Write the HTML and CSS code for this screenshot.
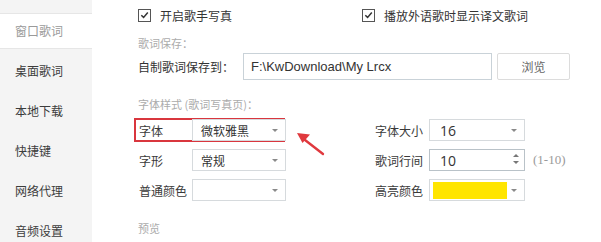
FILE: index.html
```html
<!DOCTYPE html>
<html>
<head>
<meta charset="utf-8">
<link rel="stylesheet" href="styles.css">
</head>
<body>
<div class="app">
  <nav class="sidebar">
    <div class="nav-item active">窗口歌词</div>
    <div class="nav-item">桌面歌词</div>
    <div class="nav-item">本地下载</div>
    <div class="nav-item">快捷键</div>
    <div class="nav-item">网络代理</div>
    <div class="nav-item">音频设置</div>
  </nav>
  <main class="content">
    <div class="check-row">
      <label class="check first"><span class="box"><svg viewBox="0 0 12 12" width="12" height="12"><path d="M2.5 6.2 L5 8.6 L9.6 3.2" fill="none" stroke="#333" stroke-width="1.6"/></svg></span>开启歌手写真</label>
      <label class="check"><span class="box"><svg viewBox="0 0 12 12" width="12" height="12"><path d="M2.5 6.2 L5 8.6 L9.6 3.2" fill="none" stroke="#333" stroke-width="1.6"/></svg></span>播放外语歌时显示译文歌词</label>
    </div>
    <div class="section-label">歌词保存：</div>
    <div class="path-row">
      <span class="path-label">自制歌词保存到：</span>
      <div class="path-input">F:\KwDownload\My Lrcx</div>
      <div class="btn">浏览</div>
    </div>
    <div class="section-label font-label">字体样式 (歌词写真页)：</div>
    <div class="font-grid">
      <div class="col left">
        <div class="row">
          <span class="highlight"></span>
          <span class="lbl">字体</span>
          <div class="select"><span class="val">微软雅黑</span><span class="caret"></span></div>
        </div>
        <div class="row">
          <span class="lbl">字形</span>
          <div class="select"><span class="val">常规</span><span class="caret"></span></div>
        </div>
        <div class="row">
          <span class="lbl">普通颜色</span>
          <div class="select"><span class="val"></span><span class="caret"></span></div>
        </div>
        <svg class="arrow" width="34" height="30" viewBox="0 0 34 30"><path d="M28 26 L10 12" stroke="#e0393e" stroke-width="2.4" stroke-linecap="round"/><path d="M2 5 L15 6.5 L7.5 15 Z" fill="#e0393e"/></svg>
      </div>
      <div class="col right">
        <div class="row">
          <span class="lbl">字体大小</span>
          <div class="select"><span class="val num">16</span><span class="caret"></span></div>
        </div>
        <div class="row">
          <span class="lbl">歌词行间</span>
          <div class="select spin"><span class="val num">10</span><span class="spinner"><span class="up"></span><span class="down"></span></span></div>
          <span class="range">(1-10)</span>
        </div>
        <div class="row">
          <span class="lbl">高亮颜色</span>
          <div class="select"><span class="swatch"></span><span class="caret"></span></div>
        </div>
      </div>
    </div>
    <div class="section-label preview">预览</div>
  </main>
</div>
</body>
</html>
```
FILE: styles.css
```css
* { box-sizing: border-box; }
html, body {
  margin: 0;
  padding: 0;
  background: #fff;
  width: 601px;
  height: 242px;
  overflow: hidden;
  font-family: "Noto Sans CJK SC", "Noto Sans", sans-serif;
  font-size: 12px;
  color: #3a3a3a;
}
.app {
  display: flex;
  height: 242px;
}
.sidebar {
  width: 92px;
  flex: none;
  background: #f4f4f4;
  padding-top: 11px;
  display: flex;
  flex-direction: column;
}
.nav-item {
  height: 40.5px;
  line-height: 40px;
  padding-left: 15px;
  color: #3c3c3c;
  font-size: 12px;
}
.nav-item.active {
  height: 36px;
  line-height: 34px;
  margin: 2px 0;
  background: #fff;
  border-top: 1px solid #e6e6e6;
  border-bottom: 1px solid #e6e6e6;
  color: #9a9a9a;
}
.content {
  flex: 1;
  padding-left: 46px;
  display: flex;
  flex-direction: column;
  position: relative;
}
.check-row {
  display: flex;
  height: 30px;
  align-items: center;
}
.check {
  display: flex;
  align-items: center;
  gap: 9px;
  color: #333;
}
.check.first { width: 224px; }
.box {
  width: 13px;
  height: 13px;
  border: 1px solid #555;
  display: flex;
  align-items: center;
  justify-content: center;
  background: #fff;
}
.box svg { display: block; }
.section-label {
  color: #ababab;
  font-size: 11px;
  line-height: 14px;
  margin-top: 6px;
}
.path-row {
  display: flex;
  align-items: center;
  margin-top: 3px;
  height: 27px;
}
.path-label {
  width: 105px;
  color: #333;
}
.path-input {
  width: 249px;
  height: 27px;
  border: 1px solid #c9d2d8;
  padding-left: 7px;
  font-family: "Liberation Sans", Arial, sans-serif;
  font-size: 13px;
  line-height: 25px;
  color: #333;
}
.btn {
  margin-left: 5px;
  width: 73px;
  height: 27px;
  border: 1px solid #dcdcdc;
  border-radius: 2px;
  text-align: center;
  line-height: 25px;
  color: #666;
}
.font-label { margin-top: 17px; }
.font-grid {
  display: flex;
  margin-top: 7px;
}
.col {
  display: flex;
  flex-direction: column;
  gap: 6px;
  position: relative;
}
.col.left { width: 237px; }
.row {
  display: flex;
  align-items: center;
  height: 24px;
  position: relative;
}
.left .lbl { width: 54px; padding-left: 1px; }
.right .lbl { width: 54px; }
.select {
  width: 94px;
  height: 22px;
  border: 1px solid #d6dadd;
  display: flex;
  align-items: center;
  padding-left: 8px;
  position: relative;
  background: #fff;
}
.right .select { width: 96px; }
.val { color: #333; }
.val.num {
  font-family: "Open Sans", "Noto Sans", sans-serif;
  font-size: 14px;
  padding-left: 2px;
}
.caret {
  position: absolute;
  right: 7px;
  top: 9px;
  width: 0;
  height: 0;
  border-left: 3px solid transparent;
  border-right: 3px solid transparent;
  border-top: 3px solid #8a8a8a;
}
.spin { border-color: #b9c2c8; }
.spinner {
  position: absolute;
  right: 5px;
  top: 4px;
  display: flex;
  flex-direction: column;
  gap: 4px;
}
.up, .down {
  width: 0;
  height: 0;
  border-left: 3px solid transparent;
  border-right: 3px solid transparent;
}
.up { border-bottom: 3px solid #777; }
.down { border-top: 3px solid #777; }
.range {
  margin-left: 8px;
  font-family: "Liberation Serif", serif;
  font-size: 13px;
  color: #9a9a9a;
}
.swatch {
  width: 74px;
  height: 17px;
  margin-left: -5px;
  background: #ffe500;
}
.highlight {
  position: absolute;
  left: -4px;
  top: 0;
  width: 151px;
  height: 24px;
  border: 2px solid #d9363e;
  pointer-events: none;
}
.arrow {
  position: absolute;
  left: 157px;
  top: 10px;
}
.preview { margin-top: 19px; }
```
